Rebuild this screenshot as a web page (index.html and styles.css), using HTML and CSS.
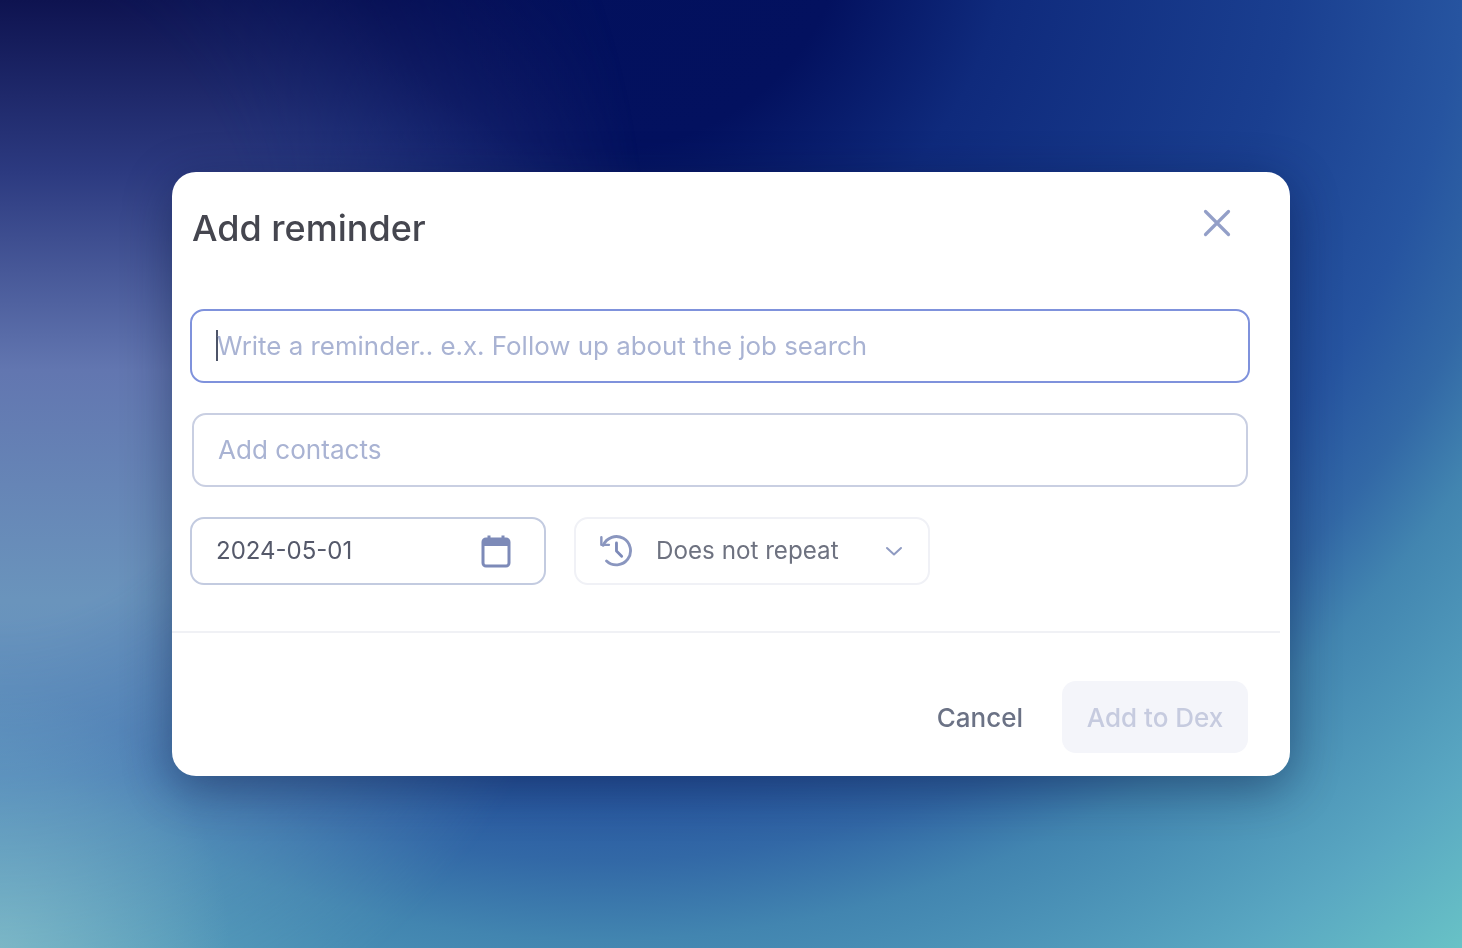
FILE: index.html
```html
<!DOCTYPE html>
<html lang="en">
<head>
  <meta charset="UTF-8" />
  <meta name="viewport" content="width=device-width, initial-scale=1.0"/>
  <title>Add reminder</title>
  <link rel="stylesheet" href="styles.css">
</head>
<body>

<div class="modal">
  <div class="modal-head">
    <h1>Add reminder</h1>
    <button class="close" aria-label="Close">
      <svg width="28" height="28" viewBox="0 0 28 28" fill="none" stroke="#939fc8" stroke-width="3.200" stroke-linecap="round">
        <path d="M2.5 2.5 L25.500 25.500 M25.500 2.500 L2.500 25.500"/>
      </svg>
    </button>
  </div>

  <div class="modal-body">
    <div class="field field-focus">
      <span class="caret"></span>
      <span class="placeholder">Write a reminder.. e.x. Follow up about the job search</span>
    </div>

    <div class="field field-contacts">
      <span class="placeholder">Add contacts</span>
    </div>

    <div class="row">
      <div class="date">
        <span>2024-05-01</span>
        <svg width="30" height="34" viewBox="0 0 30 34" fill="none">
          <path d="M8 1.500 V7 M22 1.500 V7" stroke="#7d8ab8" stroke-width="3"/>
          <rect x="2" y="5" width="26" height="27" rx="3" stroke="#7d8ab8" stroke-width="3"/>
          <path d="M2 5.500 H28 V12 H2 Z" fill="#7d8ab8"/>
        </svg>
      </div>

      <div class="repeat">
        <svg width="34" height="34" viewBox="0 0 36 36" fill="none" stroke="#8a96bf" stroke-width="3" stroke-linecap="round" stroke-linejoin="round">
          <path d="M4.500 12 A15 15 0 1 1 8 28.500"/>
          <path d="M2.500 3.500 V11.500 H10.500" stroke-width="2.600"/>
          <path d="M18.500 9.500 V18 L24 23.500" stroke="#7d8ab8"/>
        </svg>
        <span class="repeat-label">Does not repeat</span>
        <svg class="chevron" width="18" height="10" viewBox="0 0 18 10" fill="none" stroke="#8f9bc2" stroke-width="2" stroke-linecap="round" stroke-linejoin="round">
          <path d="M2 2 L9 8.500 L16 2"/>
        </svg>
      </div>
    </div>
  </div>

  <div class="modal-foot">
    <button class="cancel">Cancel</button>
    <button class="submit" disabled>Add to Dex</button>
  </div>
</div>

</body>
</html>
```

FILE: styles.css
```css
* {
  margin: 0;
  padding: 0;
  box-sizing: border-box;
}

body {
  font-family: 'Inter', sans-serif;
  width: 100%;
  height: 100vh;
  overflow: hidden;
  display: flex;
  align-items: center;
  justify-content: center;
  background:
    radial-gradient(230px 260px at 0px 948px, rgba(150, 200, 205, 0.7), rgba(150, 200, 205, 0) 100%),
    radial-gradient(circle 1357px at 600px -100px, #02105c 0, #03115f 250px, #0f2a7c 412px, #1a3f90 700px, #2654a0 868px, #3268a6 960px, #4285b0 1040px, #5aa8c2 1229px, #68c2c6 1357px);
}

/* slate glow down the left edge */
body::before {
  content: '';
  position: fixed;
  inset: 0;
  z-index: -1;
  background: linear-gradient(to bottom, #0e1350 0, #2c3a80 172px, #6276b0 370px, #6a94bc 600px, #6090c0 776px, #6aa8c0 948px);
  -webkit-mask-image: radial-gradient(ellipse 650px 800px at 0 300px, #000 40%, transparent 100%);
  mask-image: radial-gradient(ellipse 650px 800px at 0 300px, #000 40%, transparent 100%);
}

.modal {
  width: 1118px;
  height: 604px;
  background: #fff;
  border-radius: 24px;
  box-shadow: 0 12px 48px rgba(8, 20, 60, 0.45);
  display: flex;
  flex-direction: column;
  filter: blur(0.6px);
}

.modal-head {
  display: flex;
  justify-content: space-between;
  align-items: flex-start;
  padding: 36px 59px 0 20px;
  height: 137px;
}

h1 {
  font-size: 36px;
  font-weight: 500;
  line-height: 40px;
  color: #45464f;
}

.close {
  border: none;
  background: none;
  margin-top: 1px;
  line-height: 0;
}

.modal-body {
  padding: 0 30px 0 18px;
  margin-right: 10px;
  height: 324px;
  border-bottom: 2px solid #f0f1f5;
  display: flex;
  flex-direction: column;
  gap: 30px;
}

.field {
  height: 74px;
  border-radius: 14px;
  display: flex;
  align-items: center;
  font-size: 25.900px;
  padding-bottom: 2px;
}

.field-focus {
  border: 2px solid #7f92dc;
  padding-left: 24px;
}

.field-contacts {
  border: 2px solid #c9cfe2;
  margin: 0 2px;
  padding-left: 24px;
  font-size: 26.100px;
}

.caret {
  width: 2px;
  height: 31px;
  background: #4d5468;
  margin-right: -1px;
}

.placeholder {
  color: #a9b3d3;
}

.row {
  display: flex;
  gap: 28px;
}

.date,
.repeat {
  height: 68px;
  border-radius: 14px;
  display: flex;
  align-items: center;
  font-size: 24px;
  padding-bottom: 1px;
}

.date {
  width: 356px;
  border: 2px solid #c3cbe0;
  justify-content: space-between;
  padding-left: 24px;
  padding-right: 33px;
  color: #55596a;
}

.repeat {
  width: 356px;
  border: 2px solid #f0f1f6;
  padding-left: 23px;
  padding-right: 25px;
  color: #6e7280;
  font-size: 24.200px;
}

.repeat-label {
  margin-left: 23px;
  flex: 1;
}

.modal-foot {
  flex: 1;
  display: flex;
  justify-content: flex-end;
  align-items: flex-start;
  gap: 39px;
  padding: 48px 42px 0 0;
}

.modal-foot button {
  font-family: 'Inter', sans-serif;
  font-size: 26px;
  font-weight: 500;
  border: none;
  background: none;
}

.modal-foot .cancel {
  color: #6b7285;
  height: 72px;
}

.modal-foot .submit {
  width: 186px;
  height: 72px;
  border-radius: 14px;
  background: #f4f5fa;
  color: #c6cbdf;
}
```
